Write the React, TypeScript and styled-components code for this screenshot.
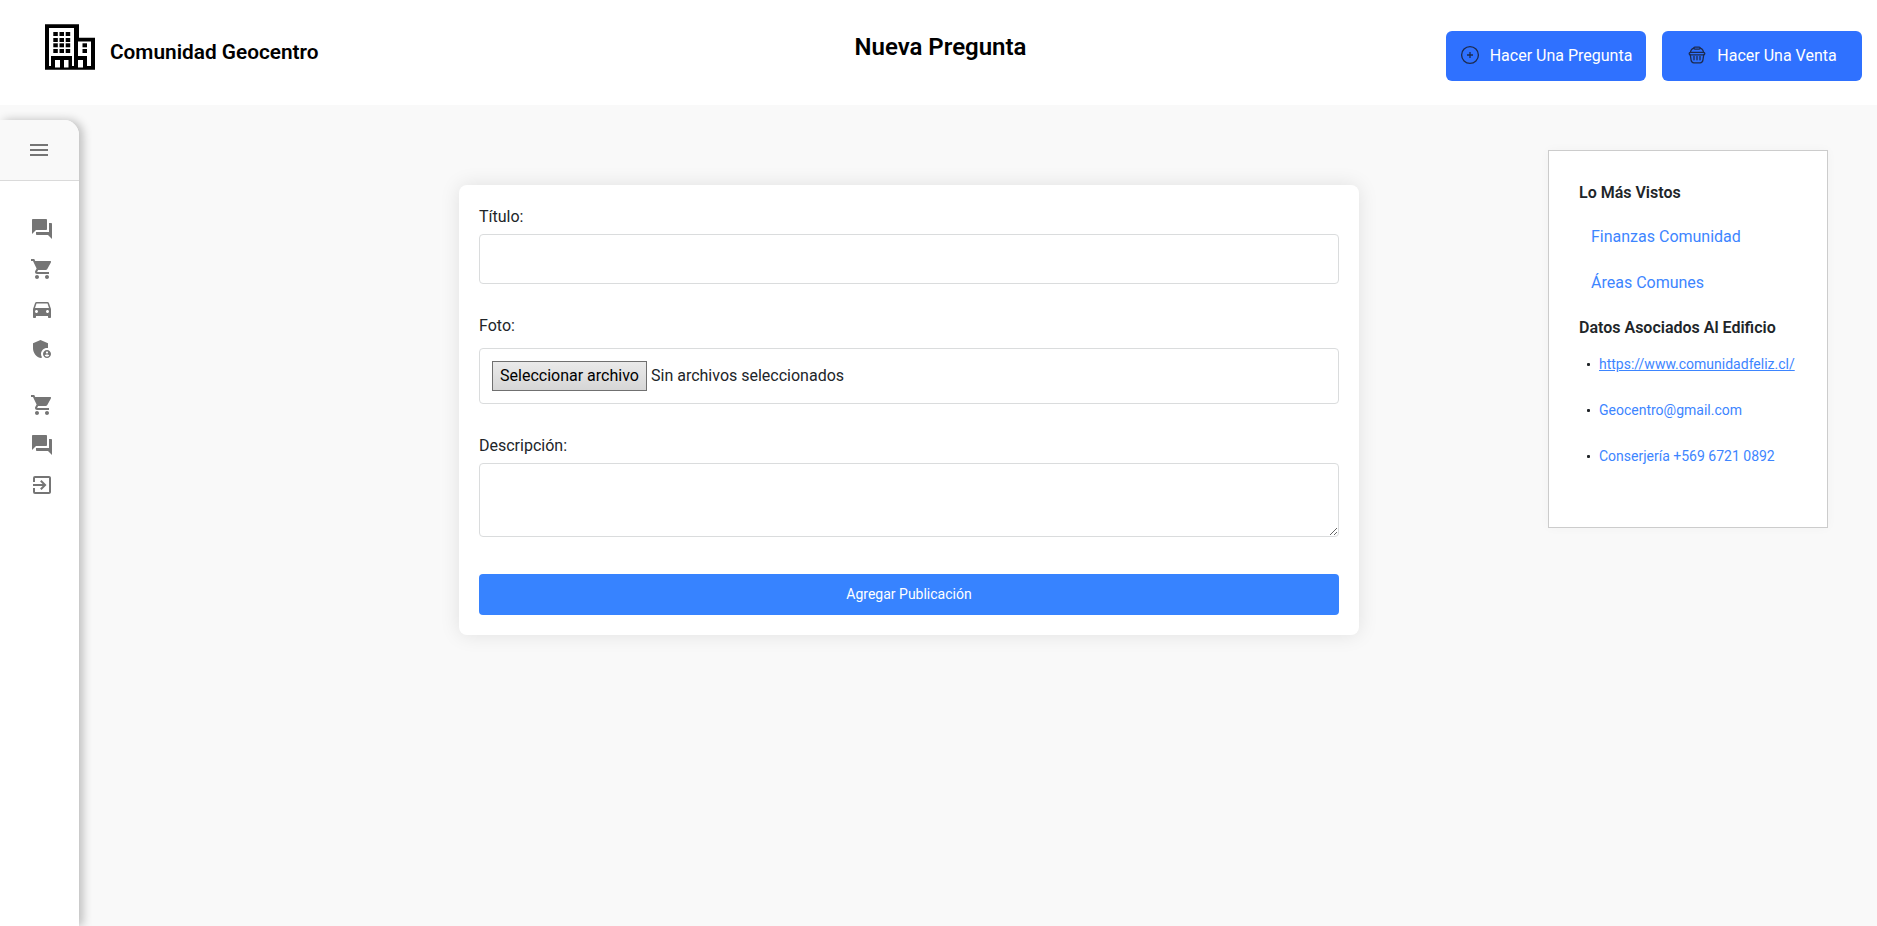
import React from "react";
import styled, { createGlobalStyle } from "styled-components";
import {
  MdMenu,
  MdQuestionAnswer,
  MdShoppingCart,
  MdDirectionsCar,
  MdAdminPanelSettings,
  MdExitToApp,
} from "react-icons/md";

const GlobalStyle = createGlobalStyle`
  *, *::before, *::after { box-sizing: border-box; }
  body {
    margin: 0;
    background: #f9f9f9;
    color: #212529;
    font-family: Roboto, "Liberation Sans", sans-serif;
    font-size: 16px;
    line-height: 24px;
  }
`;

const Page = styled.div`
  display: flex;
  flex-direction: column;
  height: 100vh;
  overflow: hidden;
`;

const Header = styled.header`
  display: grid;
  grid-template-columns: 1fr auto 1fr;
  height: 105px;
  flex: none;
  background: #fff;
  color: #000;
`;

const Brand = styled.div`
  display: flex;
  align-items: flex-start;
  gap: 15px;
  padding: 24px 0 0 45px;
`;

const BrandName = styled.span`
  margin-top: 16px;
  font-size: 20.8px;
  font-weight: 600;
`;

const PageTitle = styled.h1`
  margin: 32px 0 0 4px;
  font-size: 24px;
  line-height: 30px;
  font-weight: 600;
`;

const Actions = styled.div`
  display: flex;
  justify-content: flex-end;
  gap: 16px;
  padding: 31px 15px 0 0;
`;

const ActionButton = styled.button<{ $gap: number; $indent?: number }>`
  display: flex;
  align-items: center;
  justify-content: center;
  gap: ${(p) => p.$gap}px;
  width: 200px;
  height: 50px;
  padding: 0 0 1px ${(p) => p.$indent ?? 0}px;
  border: 0;
  border-radius: 6px;
  background: #2f71ff;
  color: #fff;
  font: 400 16px/24px Roboto, sans-serif;
  white-space: nowrap;

  svg {
    margin-bottom: 1px;
  }
`;

const Body = styled.div`
  display: flex;
  flex: 1;
  min-height: 0;
`;

const Sidebar = styled.nav`
  display: flex;
  flex-direction: column;
  width: 79px;
  flex: none;
  margin-top: 15px;
  border-top-right-radius: 15px;
  background: #fff;
  box-shadow: 4px 0 10px rgba(0, 0, 0, 0.24);
  color: #757575;
`;

const SidebarTop = styled.div`
  display: flex;
  height: 61px;
  flex: none;
  padding: 18px 0 0 27px;
  border-bottom: 1px solid #dadada;
  border-top-right-radius: 15px;
  background: #f9f9f9;
`;

const IconGroup = styled.div<{ $top: number }>`
  display: flex;
  flex-direction: column;
  gap: 16px;
  padding: ${(p) => p.$top}px 0 0 30px;
`;

const Main = styled.main`
  display: flex;
  flex: 1;
  align-items: flex-start;
  justify-content: flex-end;
  padding-right: 49px;
`;

const FormCard = styled.form`
  display: flex;
  flex-direction: column;
  width: 900px;
  height: 450px;
  margin: 80px 189px 0 0;
  padding: 20px;
  border-radius: 8px;
  background: #fff;
  box-shadow: 0 0 20px rgba(0, 0, 0, 0.1);
`;

const Label = styled.label<{ $gap: number }>`
  margin-bottom: ${(p) => p.$gap}px;
`;

const TextInput = styled.input`
  height: 50px;
  flex: none;
  margin-bottom: 30px;
  padding: 0 12px;
  border: 1px solid #dadcdd;
  border-radius: 4px;
  background: #fff;
`;

const FileField = styled.div`
  display: flex;
  align-items: center;
  gap: 4px;
  height: 56px;
  flex: none;
  margin-bottom: 30px;
  padding: 0 12px;
  border: 1px solid #dadcdd;
  border-radius: 4px;
`;

const FileButton = styled.button`
  width: 155px;
  height: 30px;
  padding: 0;
  border: 1px solid #707070;
  border-radius: 0;
  background: linear-gradient(#eaeaea, #d6d6d6);
  color: #000;
  font: 400 16px/24px Roboto, sans-serif;
  white-space: nowrap;
`;

const TextArea = styled.textarea`
  height: 74px;
  flex: none;
  margin-bottom: 37px;
  border: 1px solid #dadcdd;
  border-radius: 4px;
  resize: vertical;
`;

const Submit = styled.button`
  height: 41px;
  flex: none;
  padding: 0 0 1px;
  border: 0;
  border-radius: 4px;
  background: #3783ff;
  color: #fff;
  font: 400 14px/21px Roboto, sans-serif;
`;

const InfoPanel = styled.aside`
  width: 280px;
  height: 378px;
  margin-top: 45px;
  padding: 30px;
  border: 1px solid #ccc;
  background: #fff;
  box-shadow: 0 0 10px rgba(0, 0, 0, 0.03);
`;

const PanelHeading = styled.h2`
  margin: 0;
  font-size: 16px;
  line-height: 24px;
  font-weight: 600;
`;

const TopicLinks = styled.div`
  display: flex;
  flex-direction: column;
  gap: 22px;
  padding: 20px 0 21px 12px;
`;

const Link = styled.a<{ $underlined?: boolean }>`
  color: #3d85ff;
  text-decoration: ${(p) => (p.$underlined ? "underline" : "none")};
`;

const ContactList = styled.ul`
  display: flex;
  flex-direction: column;
  gap: 25px;
  margin: 0;
  padding: 14px 0 0 8px;
  list-style: none;
  font-size: 14px;
  line-height: 21px;
`;

const ContactItem = styled.li`
  display: flex;
  align-items: center;
  white-space: nowrap;

  &::before {
    content: "";
    width: 3px;
    height: 3px;
    margin-right: 9px;
    border-radius: 1px;
    background: #212529;
  }
`;

const BuildingLogo = () => (
  <svg width="50" height="46" viewBox="0 0 50 46">
    <path fill="#000" d="M0 .3h34v13.500h16v32H0z" />
    <path fill="#fff" d="M4 4h25v28H4zM33 17.500h13V32H33zM4 32h2v10H4zM27 32h2v10h-2zM42 32h4v10h-4zM10 36h5v7.500h-5zM19 36h4.500v7.500H19zM33 36h5v7.500h-5z" />
    {[8.300, 14.500, 20.700].map((x) =>
      [8, 14, 19.300, 25].map((y) => <rect key={`${x}-${y}`} x={x} y={y} width="4.500" height="4" />)
    )}
    {[19.300, 25].map((y) => <rect key={y} x="37.500" y={y} width="4.500" height="4" />)}
  </svg>
);

const PlusCircleIcon = () => (
  <svg width="20" height="20" viewBox="0 0 20 20" fill="none" stroke="#1d2b50" strokeWidth="1.3">
    <circle cx="10" cy="10" r="8.4" />
    <path d="M10 7v6M7 10h6" />
  </svg>
);

const BasketIcon = () => (
  <svg width="18" height="18" viewBox="0 0 18 18" fill="none" stroke="#1d2b50" strokeWidth="1.3" strokeLinecap="round" strokeLinejoin="round">
    <path d="M2.400 6.500C2.800 4 4 2.400 6 2.100M15.600 6.500C15.200 4 14 2.400 12 2.100" />
    <rect x="5.800" y="1.100" width="6.400" height="2" rx="1" />
    <rect x="1.200" y="6.300" width="15.600" height="2.500" rx="1.200" />
    <path d="M2.300 9l.8 5.200c.3 1.800 1 2.600 2.700 2.600h6.400c1.700 0 2.400-.8 2.700-2.600l.8-5.200M6 10.400v3.400M9 10.400v3.400M12 10.400v3.400" />
  </svg>
);

export default function App() {
  return (
    <>
      <GlobalStyle />
      <Page>
        <Header>
          <Brand>
            <BuildingLogo />
            <BrandName>Comunidad Geocentro</BrandName>
          </Brand>
          <PageTitle>Nueva Pregunta</PageTitle>
          <Actions>
            <ActionButton $gap={10}>
              <PlusCircleIcon />
              Hacer Una Pregunta
            </ActionButton>
            <ActionButton $gap={11} $indent={1}>
              <BasketIcon />
              Hacer Una Venta
            </ActionButton>
          </Actions>
        </Header>
        <Body>
          <Sidebar>
            <SidebarTop>
              <MdMenu size={24} />
            </SidebarTop>
            <IconGroup $top={36}>
              <MdQuestionAnswer size={24} />
              <MdShoppingCart size={24} />
              <MdDirectionsCar size={24} />
              <MdAdminPanelSettings size={24} />
            </IconGroup>
            <IconGroup $top={32}>
              <MdShoppingCart size={24} />
              <MdQuestionAnswer size={24} />
              <MdExitToApp size={24} />
            </IconGroup>
          </Sidebar>
          <Main>
            <FormCard>
              <Label $gap={5}>Título:</Label>
              <TextInput />
              <Label $gap={10}>Foto:</Label>
              <FileField>
                <FileButton type="button">Seleccionar archivo</FileButton>
                <span>Sin archivos seleccionados</span>
              </FileField>
              <Label $gap={5}>Descripción:</Label>
              <TextArea />
              <Submit type="button">Agregar Publicación</Submit>
            </FormCard>
            <InfoPanel>
              <PanelHeading>Lo Más Vistos</PanelHeading>
              <TopicLinks>
                <Link>Finanzas Comunidad</Link>
                <Link>Áreas Comunes</Link>
              </TopicLinks>
              <PanelHeading>Datos Asociados Al Edificio</PanelHeading>
              <ContactList>
                <ContactItem><Link $underlined>https://www.comunidadfeliz.cl/</Link></ContactItem>
                <ContactItem><Link>Geocentro@gmail.com</Link></ContactItem>
                <ContactItem><Link>Conserjería +569 6721 0892</Link></ContactItem>
              </ContactList>
            </InfoPanel>
          </Main>
        </Body>
      </Page>
    </>
  );
}
